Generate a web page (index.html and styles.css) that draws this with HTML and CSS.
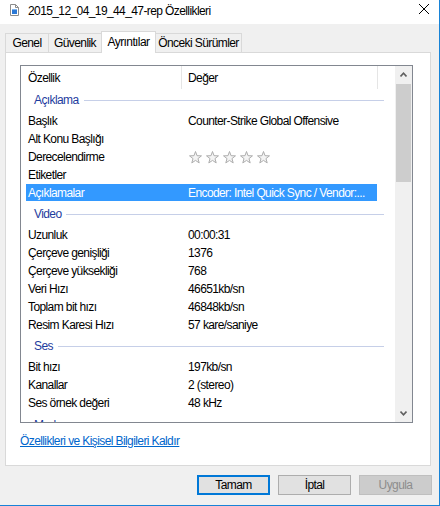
FILE: index.html
```html
<!DOCTYPE html>
<html lang="tr">
<head>
    <meta charset="UTF-8">
    <title>2015_12_04_19_44_47-rep Özellikleri</title>
    <link rel="stylesheet" href="styles.css">
</head>
<body>
<div class="window">
    <div class="titlebar">
        <svg class="file-icon" width="9" height="12" viewBox="0 0 9 12">
            <path d="M0.5 0.5 H5.5 L8.5 3.5 V11.5 H0.5 Z" fill="#fff" stroke="#8c8c8c"/>
            <path d="M5.5 0.5 V3.5 H8.5" fill="none" stroke="#8c8c8c"/>
            <rect x="2" y="5" width="5" height="5" fill="#2b79d6"/>
            <rect x="2" y="5" width="5" height="1" fill="#7fb4ec"/>
        </svg>
        <span class="title">2015_12_04_19_44_47-rep Özellikleri</span>
        <svg class="close" width="10" height="10" viewBox="0 0 10 10">
            <path d="M0 0 L10 10 M10 0 L0 10" stroke="#000" stroke-width="1"/>
        </svg>
    </div>

    <div class="tabs">
        <div class="tab tab-genel">Genel</div>
        <div class="tab tab-guvenlik">Güvenlik</div>
        <div class="tab tab-ayrinti active">Ayrıntılar</div>
        <div class="tab tab-onceki">Önceki Sürümler</div>
    </div>

    <div class="panel">
        <div class="list">
            <div class="list-body">
                <div class="list-head">
                    <div class="head-cell head-name">Özellik</div>
                    <div class="head-cell head-value">Değer</div>
                </div>

                <div class="group"><span>Açıklama</span><i class="group-line"></i></div>
                <div class="row"><span class="name">Başlık</span><span class="value">Counter-Strike Global Offensive</span></div>
                <div class="row"><span class="name">Alt Konu Başlığı</span><span class="value"></span></div>
                <div class="row">
                    <span class="name">Derecelendirme</span>
                    <span class="value stars">
                        <svg class="star" viewBox="0 0 13 13"><polygon points="6.5,0.5 8.03,4.7 12.49,4.85 8.97,7.6 10.2,11.9 6.5,9.4 2.8,11.9 4.03,7.6 0.51,4.85 4.97,4.7"/></svg>
                        <svg class="star" viewBox="0 0 13 13"><polygon points="6.5,0.5 8.03,4.7 12.49,4.85 8.97,7.6 10.2,11.9 6.5,9.4 2.8,11.9 4.03,7.6 0.51,4.85 4.97,4.7"/></svg>
                        <svg class="star" viewBox="0 0 13 13"><polygon points="6.5,0.5 8.03,4.7 12.49,4.85 8.97,7.6 10.2,11.9 6.5,9.4 2.8,11.9 4.03,7.6 0.51,4.85 4.97,4.7"/></svg>
                        <svg class="star" viewBox="0 0 13 13"><polygon points="6.5,0.5 8.03,4.7 12.49,4.85 8.97,7.6 10.2,11.9 6.5,9.4 2.8,11.9 4.03,7.6 0.51,4.85 4.97,4.7"/></svg>
                        <svg class="star" viewBox="0 0 13 13"><polygon points="6.5,0.5 8.03,4.7 12.49,4.85 8.97,7.6 10.2,11.9 6.5,9.4 2.8,11.9 4.03,7.6 0.51,4.85 4.97,4.7"/></svg>
                    </span>
                </div>
                <div class="row"><span class="name">Etiketler</span><span class="value"></span></div>
                <div class="row selected"><span class="name">Açıklamalar</span><span class="value">Encoder: Intel Quick Sync / Vendor:...</span></div>

                <div class="group"><span>Video</span><i class="group-line"></i></div>
                <div class="row"><span class="name">Uzunluk</span><span class="value">00:00:31</span></div>
                <div class="row"><span class="name">Çerçeve genişliği</span><span class="value">1376</span></div>
                <div class="row"><span class="name">Çerçeve yüksekliği</span><span class="value">768</span></div>
                <div class="row"><span class="name">Veri Hızı</span><span class="value">46651kb/sn</span></div>
                <div class="row"><span class="name">Toplam bit hızı</span><span class="value">46848kb/sn</span></div>
                <div class="row"><span class="name">Resim Karesi Hızı</span><span class="value">57 kare/saniye</span></div>

                <div class="group"><span>Ses</span><i class="group-line"></i></div>
                <div class="row"><span class="name">Bit hızı</span><span class="value">197kb/sn</span></div>
                <div class="row"><span class="name">Kanallar</span><span class="value">2 (stereo)</span></div>
                <div class="row"><span class="name">Ses örnek değeri</span><span class="value">48 kHz</span></div>

                <div class="group group-clipped"><span>Medya</span><i class="group-line"></i></div>
            </div>
            <div class="scrollbar">
                <div class="sb-btn">
                    <svg width="7" height="5" viewBox="0 0 7 5"><path d="M0.5 4.5 L3.5 1.2 L6.5 4.5" fill="none" stroke="#606060" stroke-width="1.6"/></svg>
                </div>
                <div class="sb-track"><div class="sb-thumb"></div></div>
                <div class="sb-btn">
                    <svg width="7" height="5" viewBox="0 0 7 5"><path d="M0.5 0.5 L3.5 3.8 L6.5 0.5" fill="none" stroke="#606060" stroke-width="1.6"/></svg>
                </div>
            </div>
        </div>
        <a class="link" href="#">Özellikleri ve Kişisel Bilgileri Kaldır</a>
    </div>

    <div class="buttons">
        <button class="btn default">Tamam</button>
        <button class="btn">İptal</button>
        <button class="btn" disabled>Uygula</button>
    </div>
</div>
</body>
</html>
```

FILE: styles.css
```css
html, body {
    margin: 0;
    padding: 0;
}
body {
    font-family: "Liberation Sans", Arial, sans-serif;
    font-size: 12px;
    letter-spacing: -0.6px;
    color: #000;
}
.window {
    width: 440px;
    height: 506px;
    box-sizing: border-box;
    background: #f0f0f0;
    border-right: 1px solid #1883d7;
    border-bottom: 1px solid #1883d7;
    overflow: hidden;
}

/* title bar */
.titlebar {
    height: 24px;
    background: #fff;
    display: flex;
    align-items: flex-start;
}
.file-icon {
    margin: 4px 0 0 10px;
}
.title {
    margin: 3px 0 0 9px;
    line-height: 16px;
}
.close {
    margin: 4px 10px 0 auto;
}

/* tabs */
.tabs {
    height: 28px;
    display: flex;
    align-items: flex-end;
    padding-left: 5px;
}
.tab {
    box-sizing: border-box;
    height: 19px;
    line-height: 18px;
    text-align: center;
    border: 1px solid #d9d9d9;
    border-bottom: none;
    margin-left: -1px;
    background: #f0f0f0;
}
.tab:first-child {
    margin-left: 0;
}
.tab.active {
    height: 22px;
    padding-top: 1px;
    margin-bottom: -1px;
    background: #fff;
    position: relative;
    z-index: 1;
}
.tab-genel { width: 44px; }
.tab-guvenlik { width: 54px; }
.tab-ayrinti { width: 55px; }
.tab-onceki { width: 87px; }

/* panel */
.panel {
    box-sizing: border-box;
    margin-left: 5px;
    width: 426px;
    height: 414px;
    background: #fff;
    border: 1px solid #d9d9d9;
    padding: 12px 17px 0 14px;
}
.list {
    box-sizing: border-box;
    height: 358px;
    border: 1px solid #828790;
    display: flex;
}
.list-body {
    flex: 1;
    overflow: hidden;
    padding-left: 5px;
}
.list-head {
    display: flex;
    height: 22px;
}
.head-cell {
    box-sizing: border-box;
    height: 23px;
    padding-top: 2px;
    line-height: 20px;
    border-right: 1px solid #e5e5e5;
}
.head-name {
    width: 156px;
    padding-left: 2px;
}
.head-value {
    width: 196px;
    padding-left: 6px;
}

.group {
    width: 358px;
    height: 24px;
    display: flex;
    align-items: center;
    padding-left: 8px;
    box-sizing: border-box;
    color: #1e3c9e;
}
.group-line {
    flex: 1;
    height: 1px;
    margin-left: 5px;
    background: #c6cfe8;
}
.group-clipped {
    margin-top: 1px;
}

.row {
    width: 351px;
    height: 18px;
    line-height: 18px;
    display: flex;
    white-space: nowrap;
}
.row .name {
    width: 160px;
    padding-left: 2px;
}
.row.selected {
    background: linear-gradient(#3399ff, #3399ff) no-repeat;
    background-size: 100% 17px;
    color: #fff;
}
.stars {
    display: flex;
    align-items: center;
    gap: 4px;
    padding-left: 1px;
}
.star {
    width: 13px;
    height: 13px;
    fill: #f4f4f4;
    stroke: #adadad;
    stroke-width: 1;
}

/* scrollbar */
.scrollbar {
    width: 17px;
    background: #f0f0f0;
    display: flex;
    flex-direction: column;
}
.sb-btn {
    height: 17px;
    display: flex;
    align-items: center;
    justify-content: center;
}
.sb-track {
    flex: 1;
    padding: 1px 1px 0 1px;
}
.sb-thumb {
    height: 98px;
    background: #cdcdcd;
}

.link {
    display: inline-block;
    margin-top: 10px;
    line-height: 16px;
    color: #0066cc;
    text-decoration: underline;
}

/* buttons */
.buttons {
    display: flex;
    justify-content: flex-end;
    gap: 8px;
    padding: 9px 7px 0 0;
}
.btn {
    box-sizing: border-box;
    width: 73px;
    height: 20px;
    padding: 0;
    font: inherit;
    letter-spacing: inherit;
    color: #000;
    background: #e1e1e1;
    border: 1px solid #adadad;
}
.btn.default {
    border: 2px solid #0078d7;
}
.btn:disabled {
    background: #cccccc;
    border-color: #bfbfbf;
    color: #8d8d8d;
}
```
